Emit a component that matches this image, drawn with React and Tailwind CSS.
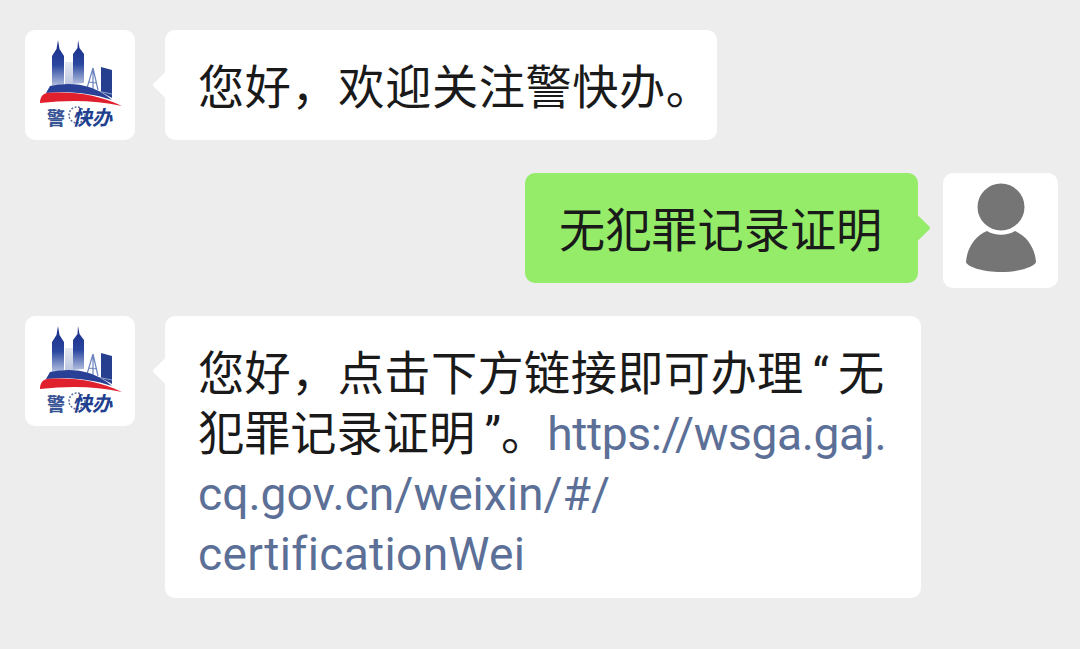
import React from 'react';

const FONT = "font-['Roboto','Noto_Sans_CJK_SC',sans-serif]";

function PoliceLogo() {
    return (
        <div className="w-[110px] h-[110px] shrink-0 rounded-[10px] bg-white overflow-hidden">
            <svg viewBox="0 0 110 110" className="w-full h-full">
                <defs>
                    <linearGradient id="tower" x1="0" y1="0" x2="0" y2="1">
                        <stop offset="0" stopColor="#182a86" />
                        <stop offset="0.55" stopColor="#2a479f" />
                        <stop offset="1" stopColor="#b4c0e0" />
                    </linearGradient>
                    <linearGradient id="pale" x1="0" y1="0" x2="0" y2="1">
                        <stop offset="0" stopColor="#e6e9f2" />
                        <stop offset="1" stopColor="#bcc6e0" />
                    </linearGradient>
                </defs>
                <path d="M40 32h8v22l-8 1z" fill="url(#pale)" />
                <path d="M33 10l1.500 9 4.500 7v28l-12 2V26l4.500-7z" fill="url(#tower)" />
                <path d="M53 10l1.500 8 4.500 6v29l-11 1V24l4.500-6z" fill="url(#tower)" />
                <path d="M68 38l-6 20M68 38l5 22M68 38v22M64 52l8 1" stroke="#6b82bd" strokeWidth="1.200" fill="none" />
                <path d="M76 37l11 3v28l-11-6z" fill="#26408f" />
                <path d="M62 59l25 5" stroke="#8fa0cc" strokeWidth="1" />
                <path d="M25 56c20-4 42-3 62 14-20-7-44-9-66-7z" fill="#2a4096" />
                <path d="M15 73c0-5 2-9 7-10 27-2 52 2 75 13-27-6-54-6-82-3z" fill="#e0202c" />
                <text x="22" y="95" fontSize="18" fontWeight="900" fill="#3a5596" fontFamily="'Noto Sans CJK SC',sans-serif">警</text>
                <circle cx="52" cy="85" r="8" fill="none" stroke="#5c6f9e" strokeWidth="1.500" strokeDasharray="2 1.500" />
                <text x="47" y="95" fontSize="20" fontWeight="700" fontStyle="italic" fill="#1f3f8f" fontFamily="'Noto Sans CJK SC',sans-serif">快办</text>
            </svg>
        </div>
    );
}

function UserAvatar() {
    return (
        <div className="w-[115px] h-[115px] shrink-0 rounded-[10px] bg-white overflow-hidden">
            <svg viewBox="0 0 115 115" className="w-full h-full">
                <circle cx="58" cy="34" r="23.500" fill="#757575" />
                <path d="M44 58c8 5 20 5 28 0 12 5 20 17 21 31-1 5-18 10-35 10s-34-5-35-10c1-14 9-26 21-31z" fill="#757575" />
            </svg>
        </div>
    );
}

function Tail({ side, color }) {
    return (
        <span className={`absolute top-[46px] w-[18px] h-[18px] rotate-45 rounded-[2px] ${color} ${side === 'left' ? 'left-[-9px]' : 'right-[-9px]'}`} />
    );
}

const LINK = 'text-[#5b6f97]';

export default function App() {
    return (
        <div className={`w-[1080px] h-[649px] overflow-hidden bg-[#ededed] pt-[30px] pl-[25px] pr-[22px] flex flex-col text-[46.2px] leading-[60px] text-[#1a1a1a] ${FONT}`}>
            <div className="flex gap-[30px]">
                <PoliceLogo />
                <div className="relative h-[110px] w-[552px] rounded-[10px] bg-white pl-[33px] pt-[5px] flex items-center whitespace-nowrap tracking-[0.6px]">
                    <Tail side="left" color="bg-white" />
                    您好，欢迎关注警快办。
                </div>
            </div>

            <div className="flex justify-end gap-[25px] mt-[33px] h-[115px]">
                <div className="relative h-[110px] w-[393px] rounded-[10px] bg-[#95ec69] pl-[34px] pt-[6px] flex items-center whitespace-nowrap">
                    <Tail side="right" color="bg-[#95ec69]" />
                    无犯罪记录证明
                </div>
                <UserAvatar />
            </div>

            <div className="flex gap-[30px] mt-[28px]">
                <PoliceLogo />
                <div className="relative h-[282px] w-[756px] rounded-[10px] bg-white pl-[33px] pt-[28px] whitespace-nowrap">
                    <Tail side="left" color="bg-white" />
                    <div className="tracking-[0.4px] [word-spacing:-3px]">您好，点击下方链接即可办理 “ 无</div>
                    <div className="[word-spacing:-2px]">犯罪记录证明 ”。<span className={`${LINK} tracking-[-0.4px]`}>https://wsga.gaj.</span></div>
                    <div className={LINK}>cq.gov.cn/weixin/#/</div>
                    <div className={`${LINK} tracking-[0.3px]`}>certificationWei</div>
                </div>
            </div>
        </div>
    );
}
